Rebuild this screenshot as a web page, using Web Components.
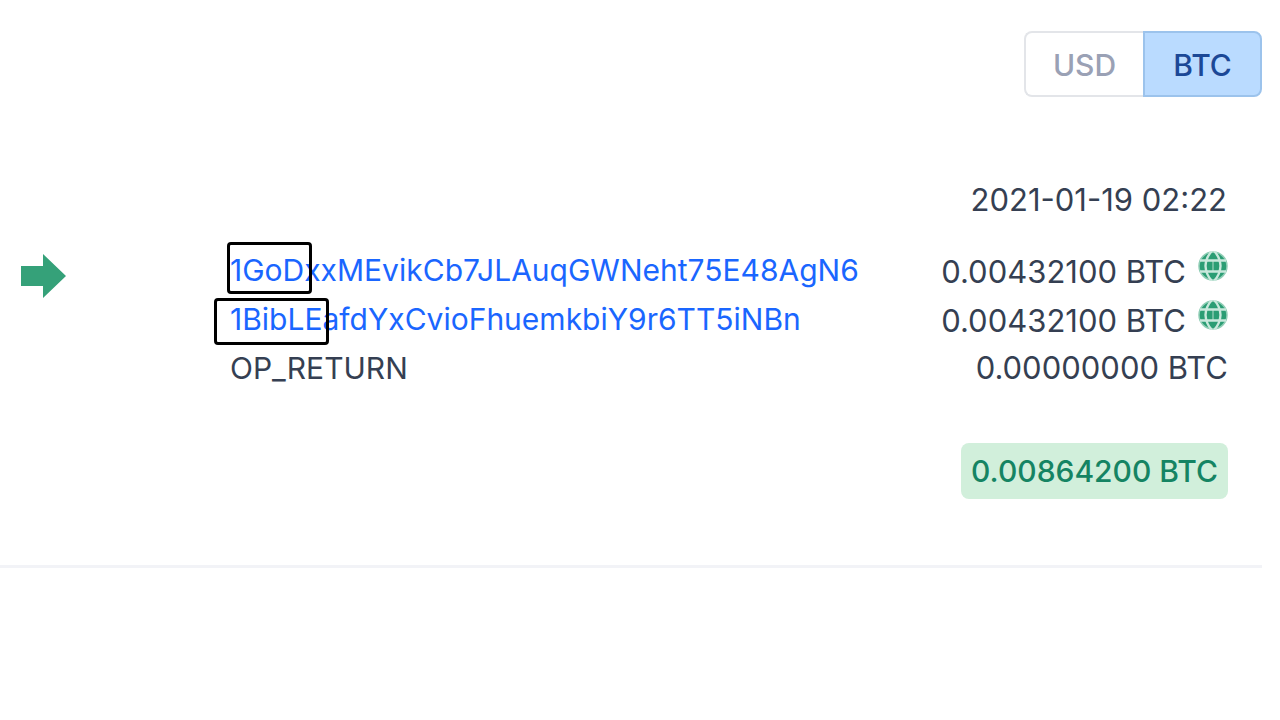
<!DOCTYPE html>
<html lang="en">
<head>
<meta charset="utf-8">
<meta name="viewport" content="width=device-width, initial-scale=1">
<title>Transaction</title>
<style>
    body {
        margin: 0;
        background: #fff;
        color: #353f52;
        font: 400 30px/44px Inter, "Liberation Sans", sans-serif;
    }
</style>
</head>
<body>
<tx-page>
    <currency-toggle slot="tools" value="BTC"></currency-toggle>
    <tx-card time="2021-01-19 02:22" total="0.00864200 BTC">
        <tx-output amount="0.00432100 BTC" spent>
            <tx-address mark="1GoD" rest="xxMEvikCb7JLAuqGWNeht75E48AgN6"></tx-address>
        </tx-output>
        <tx-output amount="0.00432100 BTC" spent>
            <tx-address class="wide" mark="1BibLE" rest="afdYxCvioFhuemkbiY9r6TT5iNBn"></tx-address>
        </tx-output>
        <tx-output amount="0.00000000 BTC">OP_RETURN</tx-output>
    </tx-card>
</tx-page>
<script>
window.customElements.define('tx-page', class extends HTMLElement {
    constructor() {
        super();
        this.attachShadow({ mode: 'open' });
        this.shadowRoot.innerHTML = `
            <style>
                :host {
                    display: block;
                    padding: 31px 18px 0 0;
                }
                header {
                    display: flex;
                    justify-content: flex-end;
                    margin-bottom: 81px;
                }
            </style>
            <header><slot name="tools"></slot></header>
            <main><slot></slot></main>
        `;
    }
});

window.customElements.define('currency-toggle', class extends HTMLElement {
    constructor() {
        super();
        this.attachShadow({ mode: 'open' });
        this.shadowRoot.innerHTML = `
            <style>
                :host {
                    display: flex;
                }
                button {
                    box-sizing: border-box;
                    height: 66px;
                    min-width: 119px;
                    margin: 0;
                    padding: 2px 26px 0;
                    border: 2px solid #e3e5e9;
                    background: #fff;
                    color: #9aa1b5;
                    font: inherit;
                    font-weight: 500;
                    cursor: pointer;
                }
                button:first-of-type {
                    border-right: 0;
                    border-radius: 8px 0 0 8px;
                }
                button:last-of-type {
                    border-radius: 0 8px 8px 0;
                }
                button[aria-pressed="true"] {
                    border-color: #9cc3ec;
                    background: #badbff;
                    color: #1c4896;
                }
            </style>
            <button type="button">USD</button>
            <button type="button">BTC</button>
        `;
    }

    static get observedAttributes() {
        return ['value'];
    }

    attributeChangedCallback(name, oldValue, newValue) {
        this.shadowRoot.querySelectorAll('button').forEach(item => {
            item.setAttribute('aria-pressed', item.textContent === newValue);
        });
    }

    connectedCallback() {
        this.shadowRoot.querySelectorAll('button').forEach(item => {
            item.addEventListener('click', () => this.setAttribute('value', item.textContent));
        });
    }
});

window.customElements.define('tx-card', class extends HTMLElement {
    constructor() {
        super();
        this.attachShadow({ mode: 'open' });
        this.shadowRoot.innerHTML = `
            <style>
                :host {
                    display: block;
                    padding-bottom: 66px;
                    border-bottom: 3px solid #f2f3f7;
                }
                .time {
                    display: block;
                    margin-bottom: 26px;
                    padding-right: 35px;
                    font-size: 31px;
                    text-align: right;
                }
                .body {
                    display: grid;
                    grid-template-columns: 210px 1fr;
                    padding: 0 34px 0 20px;
                }
                .arrow {
                    width: 46px;
                    height: 44px;
                    margin-top: 6px;
                    fill: #35a179;
                }
                .total {
                    display: flex;
                    justify-content: flex-end;
                    margin-top: 53px;
                    padding-right: 34px;
                }
                .total output {
                    padding: 6px 10px;
                    border-radius: 8px;
                    background: #d1efdb;
                    color: #158463;
                    font-weight: 500;
                }
            </style>
            <time class="time"></time>
            <div class="body">
                <svg class="arrow" viewBox="0 0 46 44" aria-hidden="true">
                    <path d="M1 12H23V0L46 22L23 44V32H1Z"></path>
                </svg>
                <div><slot></slot></div>
            </div>
            <div class="total"><output></output></div>
        `;
    }

    connectedCallback() {
        this.shadowRoot.querySelector('time').textContent = this.getAttribute('time');
        this.shadowRoot.querySelector('output').textContent = this.getAttribute('total');
    }
});

window.customElements.define('tx-output', class extends HTMLElement {
    constructor() {
        super();
        this.attachShadow({ mode: 'open' });
        this.shadowRoot.innerHTML = `
            <style>
                :host {
                    display: flex;
                    justify-content: space-between;
                    align-items: flex-start;
                    white-space: nowrap;
                }
                .amount {
                    display: flex;
                    gap: 12px;
                    font-size: 31px;
                }
                svg {
                    display: none;
                    width: 30px;
                    height: 30px;
                    margin-top: 3px;
                }
                :host([spent]) {
                    min-height: 49px;
                }
                :host([spent]) .amount {
                    line-height: 48px;
                }
                :host([spent]) svg {
                    display: block;
                }
            </style>
            <div><slot></slot></div>
            <div class="amount">
                <span></span>
                <svg viewBox="0 0 30 30" aria-hidden="true">
                    <circle cx="15" cy="15" r="14" fill="#2b9d74" stroke="#8fcdb5" stroke-width="1.5"></circle>
                    <g fill="none" stroke="#c9e8dc" stroke-width="2.4">
                        <path d="M15 10V20" stroke="#6fbd9f" stroke-width="2"></path>
                        <path d="M2 9.5H28M2 20.5H28"></path>
                        <path d="M14 0Q8 6 7.5 15Q8 24 14 30M16 0Q22 6 22.5 15Q22 24 16 30"></path>
                    </g>
                </svg>
            </div>
        `;
    }

    connectedCallback() {
        this.shadowRoot.querySelector('span').textContent = this.getAttribute('amount');
    }
});

window.customElements.define('tx-address', class extends HTMLElement {
    constructor() {
        super();
        this.attachShadow({ mode: 'open' });
        this.shadowRoot.innerHTML = `
            <style>
                :host {
                    display: block;
                    --frame: -6px -8px -2px -3px;
                }
                :host(.wide) {
                    --frame: 1px -7px -4px -16px;
                }
                a {
                    color: #1a66ff;
                    text-decoration: none;
                }
                .mark {
                    display: inline-block;
                    position: relative;
                }
                /* frame drawn over the vanity prefix */
                .mark::after {
                    content: '';
                    position: absolute;
                    inset: var(--frame);
                    border: 3px solid #000;
                    border-radius: 4px;
                }
            </style>
            <a href="#"><span class="mark"></span><span class="rest"></span></a>
        `;
    }

    connectedCallback() {
        this.shadowRoot.querySelector('.mark').textContent = this.getAttribute('mark');
        this.shadowRoot.querySelector('.rest').textContent = this.getAttribute('rest');
        this.shadowRoot.querySelector('a').href = '#' + this.getAttribute('mark') + this.getAttribute('rest');
    }
});
</script>
</body>
</html>
